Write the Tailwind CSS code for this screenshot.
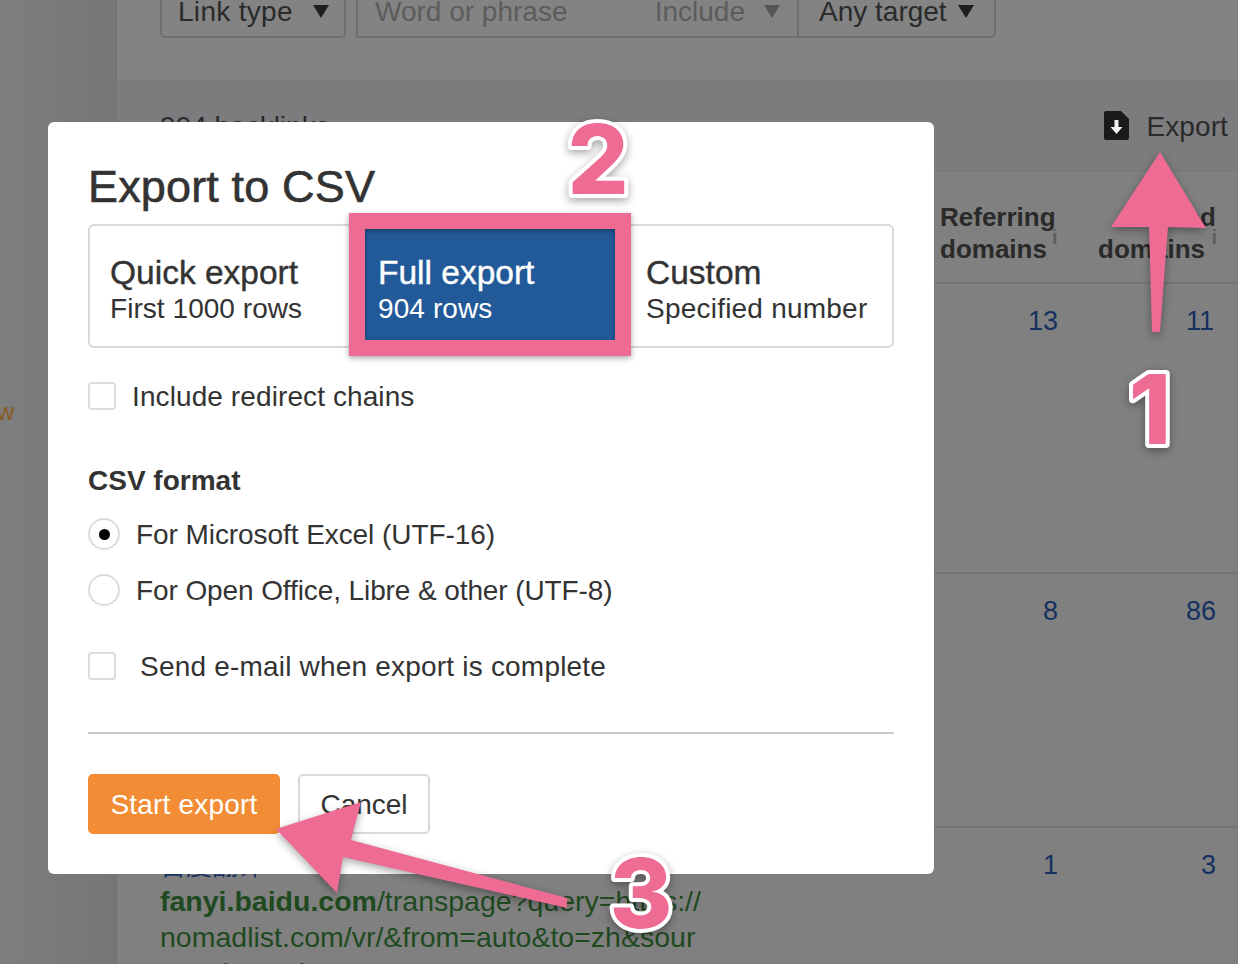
<!DOCTYPE html>
<html lang="en">
<head>
<meta charset="utf-8">
<script src="https://cdn.jsdelivr.net/npm/@tailwindcss/browser@4"></script>
</head>
<body class="font-['Liberation_Sans',Arial,sans-serif]">
<div class="relative w-[1238px] h-[964px] overflow-hidden bg-[#808080] flex text-[#2a2a2a]">
  <aside class="w-[117px] shrink-0 border-r-2 border-[#747474] bg-gradient-to-r from-[#7e7e7e] to-[#767676] flex flex-col">
    <div class="h-[394px]"></div>
    <div class="text-[#8a5a20] text-[24px] leading-[36px] -ml-[3px]">w</div>
  </aside>
  <main class="flex-1 flex flex-col min-w-0">
    <div class="h-[80px] shrink-0 bg-[#838383] flex items-end pb-[42px] pl-[43px] text-[28px] leading-none">
      <div class="h-[60px] w-[186px] shrink-0 border-2 border-[#6f6f6f] rounded-b-[5px] flex items-center justify-between pl-[16px] pr-[15px] pt-[7px]">
        <span class="tracking-[0.3px]">Link type</span><span class="w-0 h-0 border-x-[8px] border-x-transparent border-t-[13px] border-t-[#1f1f1f]"></span>
      </div>
      <div class="h-[60px] ml-[10px] w-[441px] shrink-0 border-2 border-r-0 border-[#6f6f6f] flex items-center pl-[17px] pr-[17px] pt-[7px] text-[#5c5c5c]">
        <span class="flex-1">Word or phrase</span><span>Include</span><span class="ml-[19px] w-0 h-0 border-x-[8px] border-x-transparent border-t-[13px] border-t-[#555555]"></span>
      </div>
      <div class="h-[60px] w-[199px] shrink-0 border-2 border-[#6f6f6f] rounded-br-[5px] flex items-center pl-[20px] pt-[7px]">
        <span>Any target</span><span class="ml-[11px] w-0 h-0 border-x-[8px] border-x-transparent border-t-[13px] border-t-[#1f1f1f]"></span>
      </div>
    </div>
    <div class="h-[91px] shrink-0 bg-[#7c7c7e] border-b border-[#767676] flex items-center justify-between pl-[43px] pr-[10px] pt-[3px] text-[28px]">
      <span>904 backlinks</span>
      <div class="flex items-center gap-[17px]">
        <svg class="w-[25px] h-[29px] -mt-[3px]" viewBox="0 0 25 29"><path d="M2 0H17L25 8V27a2 2 0 0 1-2 2H2a2 2 0 0 1-2-2V2a2 2 0 0 1 2-2Z" fill="#1a1a1a"/><path d="M10.5 9h4v7h4l-6 7-6-7h4Z" fill="#f2f2f2"/></svg>
        <span class="text-[#2a2a2a] tracking-[0.1px]">Export</span>
      </div>
    </div>
    <div class="h-[113px] shrink-0 border-b-2 border-[#747474] flex justify-end pr-[22px] pt-[30px] text-[26px] leading-[32px] font-bold">
      <div class="w-[120px] relative"><div class="whitespace-nowrap">Referring</div><div class="whitespace-nowrap">domains</div><span class="absolute left-[112px] top-[26px] text-[#5f5f5f] text-[20px] leading-none font-bold">i</span></div>
      <div class="ml-[38px] w-[118px] relative text-right"><div class="whitespace-nowrap">Linked</div><div class="whitespace-nowrap mr-[11px]">domains</div><span class="absolute right-[-1px] top-[26px] text-[#5f5f5f] text-[20px] leading-none font-bold">i</span></div>
    </div>
    <div class="h-[290px] shrink-0 border-b-2 border-[#747474] flex justify-end pr-[24px] pt-[21px] text-[27px] leading-[32px] text-[#16305f]">
      <span class="w-[100px] text-right mr-[-2px]">13</span><span class="w-[158px] text-right">11</span>
    </div>
    <div class="h-[254px] shrink-0 border-b-2 border-[#747474] flex justify-end pr-[22px] pt-[21px] text-[27px] leading-[32px] text-[#16305f]">
      <span class="w-[100px] text-right">8</span><span class="w-[158px] text-right">86</span>
    </div>
    <div class="relative flex-1 flex pl-[43px] pr-[22px] pt-[21px]">
      <div class="w-[560px] shrink-0 text-[#1f4a1f] text-[28.5px] leading-[36px] mt-[2px]">
        <div class="text-[#16305f] text-[26px] leading-[26px] font-['Noto_Sans_CJK_SC',sans-serif]">百度翻译</div>
        <div class="mt-[6px] whitespace-nowrap"><b>fanyi.baidu.com</b>/transpage?query=https://</div>
        <div class="whitespace-nowrap">nomadlist.com/vr/&amp;from=auto&amp;to=zh&amp;sour</div>
        <div class="whitespace-nowrap">ce=gl&amp;render=1</div>
      </div>
      <div class="flex-1 flex justify-end text-[27px] leading-[32px] text-[#16305f]">
        <span class="w-[100px] text-right">1</span><span class="w-[158px] text-right">3</span>
      </div>
    </div>
  </main>

  <section class="absolute left-[48px] top-[122px] w-[886px] h-[752px] bg-white rounded-[6px] px-[40px] text-[#333333]">
    <h2 class="h-[102px] pt-[39px] text-[45px] leading-[52px] font-normal tracking-[0.15px] [-webkit-text-stroke:0.6px_#333333]">Export to CSV</h2>
    <div class="h-[124px] border-2 border-[#d9d9d9] rounded-[6px] flex">
      <div class="w-[267px] pl-[20px] pt-[29px]">
        <div class="text-[33.5px] leading-[36px] [-webkit-text-stroke:0.4px_#333333]">Quick export</div>
        <div class="mt-[1px] text-[28px] leading-[34px] tracking-[0.05px]">First 1000 rows</div>
      </div>
      <div class="w-[269px] bg-[#225a99] text-white pl-[21px] pt-[29px]">
        <div class="text-[33.5px] leading-[36px] [-webkit-text-stroke:0.4px_#ffffff]">Full export</div>
        <div class="mt-[1px] text-[28px] leading-[34px] tracking-[0.1px]">904 rows</div>
      </div>
      <div class="flex-1 pl-[20px] pt-[29px]">
        <div class="text-[33.5px] leading-[36px] [-webkit-text-stroke:0.4px_#333333]">Custom</div>
        <div class="mt-[1px] text-[28px] leading-[34px] tracking-[0.22px]">Specified number</div>
      </div>
    </div>
    <div class="mt-[32px] h-[32px] flex items-center text-[28px]">
      <span class="w-[28px] h-[28px] border-2 border-[#dcdce0] rounded-[4px] mr-[16px]"></span><span class="mt-[2px] tracking-[0.1px]">Include redirect chains</span>
    </div>
    <div class="mt-[52px] h-[32px] flex items-center text-[28px] font-bold"><span class="mt-[2px]">CSV format</span></div>
    <div class="mt-[22px] h-[32px] flex items-center text-[28px]">
      <span class="w-[32px] h-[32px] border-2 border-[#dcdce0] rounded-full mr-[16px] flex items-center justify-center"><span class="w-[11px] h-[11px] rounded-full bg-black"></span></span><span class="mt-[2px] -tracking-[0.07px]">For Microsoft Excel (UTF-16)</span>
    </div>
    <div class="mt-[24px] h-[32px] flex items-center text-[28px]">
      <span class="w-[32px] h-[32px] border-2 border-[#dcdce0] rounded-full mr-[16px]"></span><span class="mt-[2px] -tracking-[0.1px]">For Open Office, Libre &amp; other (UTF-8)</span>
    </div>
    <div class="mt-[44px] h-[32px] flex items-center text-[28px]">
      <span class="w-[28px] h-[28px] border-2 border-[#dcdce0] rounded-[4px] mr-[24px]"></span><span class="mt-[2px] tracking-[0.2px]">Send e-mail when export is complete</span>
    </div>
    <div class="mt-[50px] h-[2px] bg-[#cccccc]"></div>
    <div class="mt-[40px] flex gap-[18px] text-[28px]">
      <button class="w-[192px] h-[60px] pt-[2px] rounded-[5px] bg-[#f28d35] text-white tracking-[0.2px]">Start export</button>
      <button class="w-[132px] h-[60px] pt-[2px] rounded-[5px] border-2 border-[#d9d9d9] text-[#333333]">Cancel</button>
    </div>
  </section>

  <div class="absolute left-[349px] top-[213px] w-[282px] h-[143px] border-[16px] border-[#ee6b94] shadow-[0_2px_6px_rgba(0,0,0,0.35),inset_0_2px_5px_rgba(0,0,0,0.35)]"></div>

  <svg class="absolute inset-0 w-[1238px] h-[964px] drop-shadow-[0_3px_4px_rgba(0,0,0,0.35)]" viewBox="0 0 1238 964">
    <path d="M1160 152 1206 228 1168 227 1160 332H1152L1149 227 1111 227Z" fill="#ee6b94"/>
    <path d="M276 829 361 802 351 840 567 898V908L343 857 337 893Z" fill="#ee6b94"/>
    <g font-family="Inter, Liberation Sans, sans-serif" font-weight="800" font-size="96" fill="#ee6b94" stroke="#ffffff" stroke-width="8" stroke-linejoin="round" paint-order="stroke fill" text-anchor="middle">
      <text x="598" y="194">2</text>
      <text x="1150" y="444">1</text>
      <text x="641" y="928">3</text>
    </g>
  </svg>
</div>
</body>
</html>
